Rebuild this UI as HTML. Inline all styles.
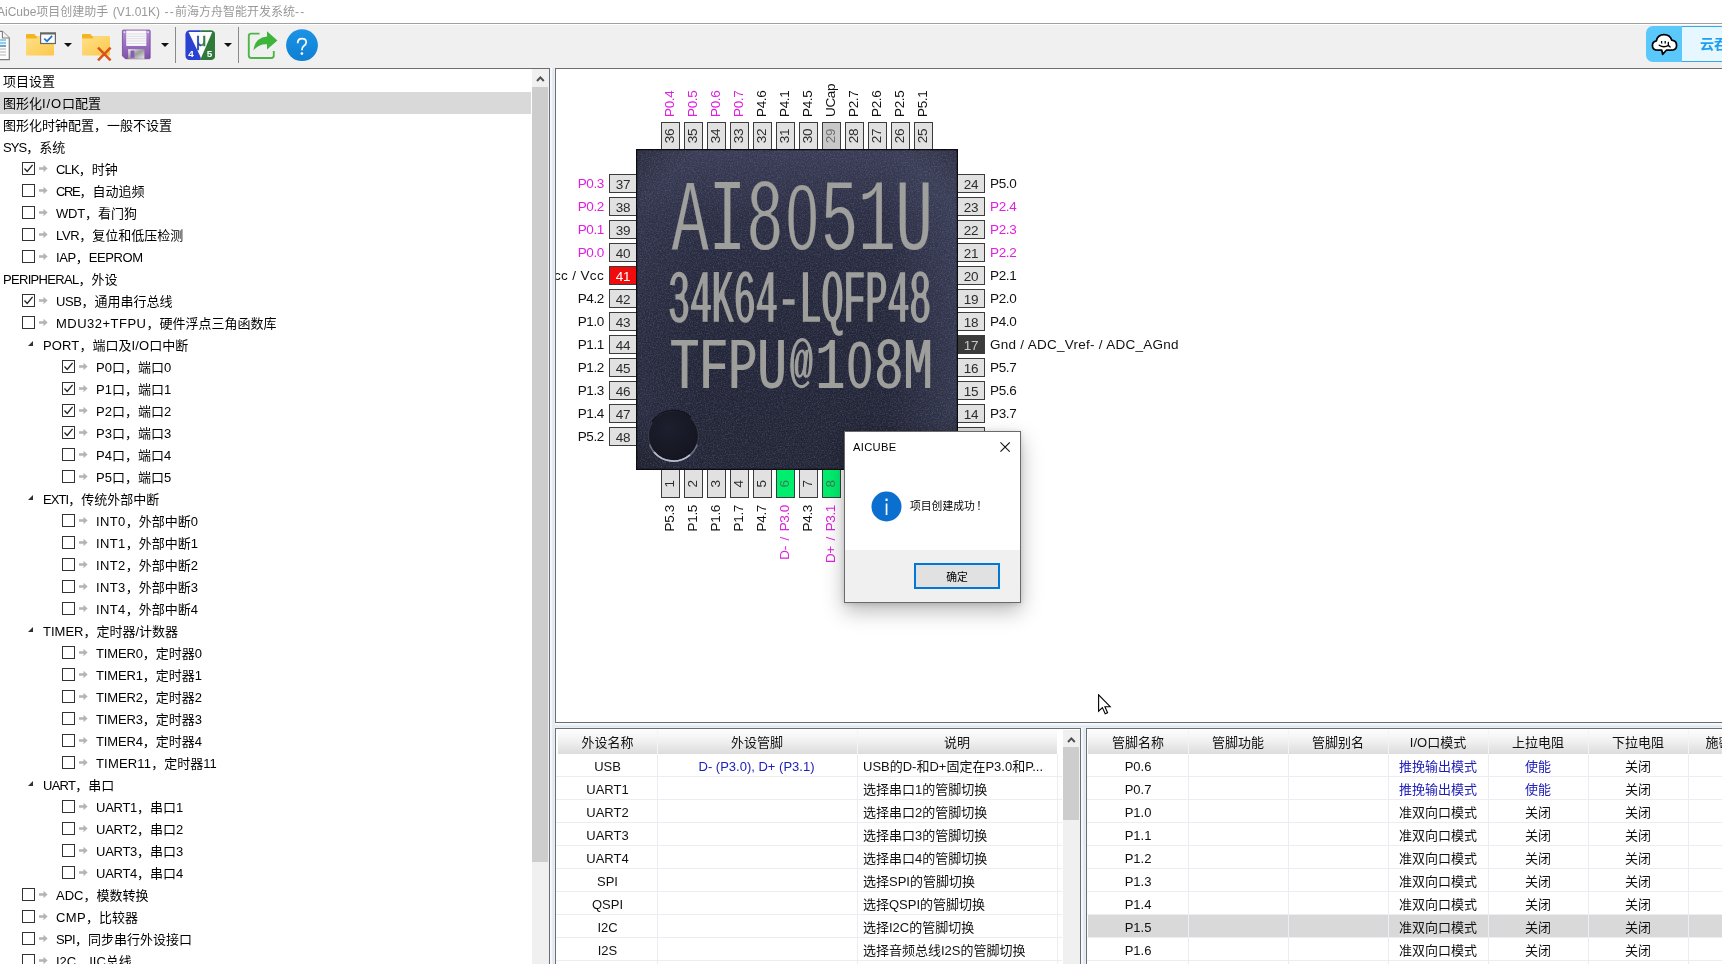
<!DOCTYPE html>
<html lang="zh-CN"><head><meta charset="utf-8"><title>AiCube</title>
<style>
*{box-sizing:border-box;margin:0;padding:0}
html,body{width:1722px;height:964px;overflow:hidden}
body{position:relative;background:#f0f0f0;font-family:"Liberation Sans","Noto Sans CJK SC",sans-serif;font-size:13px;color:#000;-webkit-font-smoothing:antialiased}
.abs{position:absolute}
#title{left:0;top:0;width:1722px;height:23px;background:#fff;color:#999;font-size:12px;line-height:23px;white-space:nowrap}
#title span{position:absolute;left:-3px;top:0.5px;word-spacing:1px}
#title i{font-style:normal;letter-spacing:1.3px}
.l{letter-spacing:-0.35px}
#tbline{left:0;top:23px;width:1722px;height:1px;background:#a0a0a0}
#toolbar{left:0;top:24px;width:1722px;height:44px;background:#f0f0f0}
.sep{position:absolute;top:27px;width:1px;height:36px;background:#8a8a8a}
.dd{position:absolute;width:0;height:0;border-left:4px solid transparent;border-right:4px solid transparent;border-top:4px solid #111;top:43px}
#tree{left:-1px;top:68px;width:551px;height:900px;background:#fff;border:1px solid #6e6e6e;overflow:hidden}
.trow{position:absolute;left:0;height:22px;line-height:22px;margin-top:1.5px;white-space:nowrap;font-size:13px;color:#000}
.cb{position:absolute;width:13px;height:13px;border:1px solid #333;background:#fff}
.cb svg{position:absolute;left:0;top:0}
.ar{position:absolute;width:9px;height:9px}
.ex{position:absolute;width:0;height:0;border-left:5.5px solid transparent;border-bottom:5.5px solid #303030}
#tsb{left:532px;top:69px;width:17px;height:895px;background:#f0f0f0}
#tsb .th{position:absolute;left:0;top:18px;width:16px;height:775px;background:#cdcdcd}
.gap{background:linear-gradient(90deg,#f7fafd,#f2f7fb 40%,#d9e4ed 60%,#eef3f7)}
.gaph{background:linear-gradient(180deg,#f7fafd,#f2f7fb 40%,#dbe5ee 60%,#eef3f7)}
.panel{background:#fff;border:1px solid #6e6e6e;overflow:hidden}
.pin{position:absolute;background:#e1e1e1;border:1px solid #3c3c3c;color:#2c2c2c;font-size:13.5px;letter-spacing:-0.3px;text-align:center;white-space:nowrap}
.pl{position:absolute;font-size:13.5px;letter-spacing:-0.35px;white-space:nowrap;color:#111;line-height:20.5px;height:19px}
.vt{position:absolute;font-size:13.5px;letter-spacing:-0.35px;white-space:nowrap;color:#111;transform-origin:0 0;transform:rotate(-90deg);line-height:19px;height:19px}
.mg{color:#e020e0}
.hdr{position:absolute;height:24px;background:linear-gradient(#fdfdfd,#f1f1f1 45%,#dcdcdc);line-height:25px;text-align:center;font-size:13px;color:#111;white-space:nowrap;overflow:hidden}
.cell{position:absolute;height:23px;line-height:25.5px;font-size:13px;white-space:nowrap;overflow:hidden;color:#111}
.c{text-align:center}
.bl{color:#2020b8}
.hl{position:absolute;height:1px;background:#ececf2}
.vl{position:absolute;width:1px;background:#ececf2}
#app{position:absolute;left:0;top:0;width:1722px;height:964px;overflow:hidden;will-change:transform;background:#f0f0f0}
</style></head><body><div id="app">

<div id="title" class="abs"><span>AiCube项目创建助手 (V1.01K) <i>--</i>前海方舟智能开发系统<i>--</i></span></div>
<div id="tbline" class="abs"></div><div class="abs" style="left:0;top:24px;width:1722px;height:1px;background:#fff"></div>
<div id="toolbar" class="abs" style="top:25px;height:43px"></div>
<!-- new doc icon (cut off at left) -->
<svg class="abs" style="left:-15px;top:29.5px" width="26" height="31" viewBox="0 0 26 31">
<path d="M1.5 1.3H17.4L24.3 8V29.6H1.5Z" fill="#fdfdfd" stroke="#7e7e7e" stroke-width="1.2"/>
<path d="M17.4 1.3V8H24.3" fill="#f3f3f3" stroke="#7e7e7e" stroke-width="1.1"/>
<rect x="5" y="9.2" width="16" height="7.6" fill="#dff4fb"/>
<path d="M5 10H21M5 13H21" stroke="#4aa6e2" stroke-width="1"/><path d="M5 16H21" stroke="#1f5f9f" stroke-width="1.1"/><path d="M5 19H21M5 22H21M5 25H21" stroke="#b4b4b4" stroke-width="1"/>
</svg>
<!-- folder with check window -->
<svg class="abs" style="left:25px;top:30px" width="33" height="28" viewBox="0 0 33 28">
<defs><linearGradient id="fg1" x1="0" y1="0" x2="1" y2="1"><stop offset="0" stop-color="#ffe08a"/><stop offset="1" stop-color="#fbc84a"/></linearGradient></defs>
<path d="M1 5.2Q1 4 2.2 4H9.2L11.6 6.6H28Q29 6.6 29 7.6V9H1Z" fill="#f4b41e"/>
<path d="M1 8.6H11.2L13.6 6.6H28Q29 6.6 29 7.6V24.4Q29 25.6 27.8 25.6H2.2Q1 25.6 1 24.4Z" fill="url(#fg1)"/>
<rect x="15.6" y="2.9" width="14.8" height="10.6" fill="#fdfdfd" stroke="#666" stroke-width="1.2"/>
<rect x="15.6" y="2.9" width="14.8" height="1.6" fill="#666"/>
<path d="M19.2 8.6L22 11.2L27.2 5.9" fill="none" stroke="#1f78d0" stroke-width="1.7"/>
</svg>
<div class="dd" style="left:64px"></div>
<!-- folder with red X -->
<svg class="abs" style="left:81px;top:30px" width="33" height="33" viewBox="0 0 33 33">
<path d="M1 5.2Q1 4 2.2 4H9.2L11.6 6.6H28Q29 6.6 29 7.6V9H1Z" fill="#f4b41e"/>
<path d="M1 8.6H11.2L13.6 6.6H28Q29 6.6 29 7.6V24.4Q29 25.6 27.8 25.6H2.2Q1 25.6 1 24.4Z" fill="url(#fg1)"/>
<path d="M17 17.6L29.6 30.4M29.6 17.6L17 30.4" stroke="#d9541a" stroke-width="2.5" fill="none"/>
</svg>
<!-- floppy -->
<svg class="abs" style="left:120.8px;top:29.4px" width="30.6" height="30.8" viewBox="0 0 32 32">
<defs><linearGradient id="fl1" x1="0" y1="0" x2="0" y2="1"><stop offset="0" stop-color="#b58ad6"/><stop offset="1" stop-color="#7f52a8"/></linearGradient>
<linearGradient id="fl2" x1="0" y1="0" x2="1" y2="1"><stop offset="0" stop-color="#f2f2f2"/><stop offset="0.5" stop-color="#9a9a9a"/><stop offset="1" stop-color="#e8e8e8"/></linearGradient></defs>
<path d="M1.5 2Q1.5 1 2.5 1H29.5Q30.5 1 30.5 2V30Q30.5 31 29.5 31H4.5L1.5 28Z" fill="url(#fl1)" stroke="#6b4392" stroke-width="0.8"/>
<rect x="5.5" y="1.6" width="21" height="16" fill="#fafafa"/>
<path d="M6 5H26M6 7.5H26M6 10H26M6 12.5H26M6 15H26" stroke="#d6d6e2" stroke-width="0.9"/>
<rect x="7.5" y="21" width="17" height="10" fill="url(#fl2)"/>
<rect x="10" y="22.5" width="4" height="7.5" fill="#8a5bb4"/>
<rect x="2.8" y="2.4" width="1.6" height="1.6" fill="#efe6f7"/><rect x="27.6" y="2.4" width="1.6" height="1.6" fill="#efe6f7"/>
</svg>
<div class="dd" style="left:161px"></div>
<div class="sep" style="left:175px"></div>
<!-- uVision 4/5 icon -->
<svg class="abs" style="left:184.5px;top:29.8px" width="30.6" height="30.4" viewBox="0 0 32 32">
<defs><clipPath id="uvc"><rect x="0.3" y="0.3" width="31.4" height="31.4" rx="4.5"/></clipPath>
<linearGradient id="mug" x1="0" y1="0" x2="1" y2="0"><stop offset="0.5" stop-color="#2747b8"/><stop offset="0.5" stop-color="#2f7d4a"/></linearGradient></defs>
<g clip-path="url(#uvc)">
<rect x="0" y="0" width="16.5" height="32" fill="#2a42cf"/><rect x="16.5" y="0" width="15.5" height="32" fill="#2f7a3a"/>
<path d="M3.6 2.2H28.6L16.8 29.4Z" fill="#fcfcfc"/>
</g>
<text x="16.9" y="16.6" font-family="Liberation Sans, sans-serif" font-size="19" text-anchor="middle" fill="url(#mug)" stroke="url(#mug)" stroke-width="0.5">μ</text>
<text x="6.2" y="28.6" font-family="Liberation Sans, sans-serif" font-weight="bold" font-size="10.5" text-anchor="middle" fill="#fff">4</text>
<text x="25.6" y="28.6" font-family="Liberation Sans, sans-serif" font-weight="bold" font-size="10.5" text-anchor="middle" fill="#fff">5</text>
</svg>
<div class="dd" style="left:223.5px"></div>
<div class="sep" style="left:238px"></div>
<!-- share icon -->
<svg class="abs" style="left:247px;top:30px" width="32" height="30" viewBox="0 0 32 30">
<path d="M12.5 3.6H4.2Q1.8 3.6 1.8 6V25.6Q1.8 28 4.2 28H24.4Q26.8 28 26.8 25.6V21" fill="none" stroke="#4cb648" stroke-width="1.9"/>
<path d="M20 1.2L30.4 10.4L20 19.6V14.2Q11.6 13.6 6.4 20.6Q7.6 8 20 6.6Z" fill="#3db43a"/>
</svg>
<!-- help -->
<svg class="abs" style="left:285px;top:28px" width="34" height="34" viewBox="0 0 34 34">
<defs><linearGradient id="hg" x1="0" y1="0" x2="0" y2="1"><stop offset="0" stop-color="#1b93e6"/><stop offset="1" stop-color="#0f7fd2"/></linearGradient></defs>
<circle cx="17" cy="17.2" r="15.9" fill="url(#hg)"/>
<path d="M12.7 15.2Q12.7 10.6 17 10.6Q21.2 10.6 21.2 14.2Q21.2 16.2 19 17.7Q16.9 19.1 16.9 22.2" fill="none" stroke="#fff" stroke-width="1.7"/>
<circle cx="16.9" cy="25.6" r="1.35" fill="#fff"/>
</svg>
<!-- cloud badge -->
<div class="abs" style="left:1646px;top:26px;width:90px;height:36px;border-radius:7px;background:#5bc8fb;overflow:hidden">
<div class="abs" style="left:36px;top:0;width:60px;height:36px;background:#e6f7ff;border-top:1px solid #35a8ea;border-bottom:1px solid #35a8ea"></div>
<svg class="abs" style="left:5px;top:7px" width="27" height="23" viewBox="0 0 27 23">
<path d="M7.2 17.2Q1.4 17.2 1.4 12.4Q1.4 8.6 5.4 7.8Q6.6 1.6 13 1.6Q19 1.6 20.8 7.2Q25.6 7.8 25.6 12.4Q25.6 17.2 19.6 17.2H15.4L11.6 21.4L10.8 17.2Z" fill="#fff" stroke="#000" stroke-width="1.7" stroke-linejoin="round"/>
<path d="M10.6 8V10.4M14.2 8V10.4" stroke="#000" stroke-width="1.3" fill="none"/>
<path d="M8.2 12.2Q12.6 15.2 17.6 12.4M17.4 9.4Q16.6 12.6 19.2 14" stroke="#000" stroke-width="1.3" fill="none" stroke-linecap="round"/>
</svg>
<div class="abs" style="left:54px;top:8px;font-size:14px;line-height:20px;font-weight:bold;color:#1e9ff0;white-space:nowrap">云吞</div>
</div>

<div id="tree" class="abs">
<div class="abs" style="left:0;top:23px;width:531px;height:22px;background:#d9d9d9"></div>
<div class="trow" id="r0" style="left:3px;top:0px">项目设置</div>
<div class="trow" id="r1" style="left:3px;top:22px">图形化<span style="letter-spacing:0.84px">I/O</span>口配置</div>
<div class="trow" id="r2" style="left:3px;top:44px">图形化时钟配置，一般不设置</div>
<div class="trow" id="r3" style="left:3px;top:66px"><span style="letter-spacing:-0.94px">SYS</span>，系统</div>
<div class="cb" style="left:22px;top:93px"><svg width="11" height="11" viewBox="0 0 11 11"><path d="M1.5 5.5 L4.2 8.4 L9.6 1.8" fill="none" stroke="#222" stroke-width="1.3"/></svg></div>
<svg class="ar" style="left:39px;top:95px" viewBox="0 0 9 9"><path d="M0 3.2H4.5V0.8L8.6 4.5L4.5 8.2V5.8H0Z" fill="#b4b4b4"/></svg>
<div class="trow" id="r4" style="left:56px;top:88px"><span style="letter-spacing:-0.84px">CLK</span>，时钟</div>
<div class="cb" style="left:22px;top:115px"></div>
<svg class="ar" style="left:39px;top:117px" viewBox="0 0 9 9"><path d="M0 3.2H4.5V0.8L8.6 4.5L4.5 8.2V5.8H0Z" fill="#b4b4b4"/></svg>
<div class="trow" id="r5" style="left:56px;top:110px"><span style="letter-spacing:-1.36px">CRE</span>，自动追频</div>
<div class="cb" style="left:22px;top:137px"></div>
<svg class="ar" style="left:39px;top:139px" viewBox="0 0 9 9"><path d="M0 3.2H4.5V0.8L8.6 4.5L4.5 8.2V5.8H0Z" fill="#b4b4b4"/></svg>
<div class="trow" id="r6" style="left:56px;top:132px"><span style="letter-spacing:-0.24px">WDT</span>，看门狗</div>
<div class="cb" style="left:22px;top:159px"></div>
<svg class="ar" style="left:39px;top:161px" viewBox="0 0 9 9"><path d="M0 3.2H4.5V0.8L8.6 4.5L4.5 8.2V5.8H0Z" fill="#b4b4b4"/></svg>
<div class="trow" id="r7" style="left:56px;top:154px"><span style="letter-spacing:-0.38px">LVR</span>，复位和低压检测</div>
<div class="cb" style="left:22px;top:181px"></div>
<svg class="ar" style="left:39px;top:183px" viewBox="0 0 9 9"><path d="M0 3.2H4.5V0.8L8.6 4.5L4.5 8.2V5.8H0Z" fill="#b4b4b4"/></svg>
<div class="trow" id="r8" style="left:56px;top:176px"><span style="letter-spacing:-0.40px">IAP</span>，<span style="letter-spacing:-0.40px">EEPROM</span></div>
<div class="trow" id="r9" style="left:3px;top:198px"><span style="letter-spacing:-0.69px">PERIPHERAL</span>，外设</div>
<div class="cb" style="left:22px;top:225px"><svg width="11" height="11" viewBox="0 0 11 11"><path d="M1.5 5.5 L4.2 8.4 L9.6 1.8" fill="none" stroke="#222" stroke-width="1.3"/></svg></div>
<svg class="ar" style="left:39px;top:227px" viewBox="0 0 9 9"><path d="M0 3.2H4.5V0.8L8.6 4.5L4.5 8.2V5.8H0Z" fill="#b4b4b4"/></svg>
<div class="trow" id="r10" style="left:56px;top:220px"><span style="letter-spacing:-0.45px">USB</span>，通用串行总线</div>
<div class="cb" style="left:22px;top:247px"></div>
<svg class="ar" style="left:39px;top:249px" viewBox="0 0 9 9"><path d="M0 3.2H4.5V0.8L8.6 4.5L4.5 8.2V5.8H0Z" fill="#b4b4b4"/></svg>
<div class="trow" id="r11" style="left:56px;top:242px"><span style="letter-spacing:0.49px">MDU32+TFPU</span>，硬件浮点三角函数库</div>
<div class="ex" style="left:28px;top:272px"></div>
<div class="trow" id="r12" style="left:43px;top:264px"><span style="letter-spacing:0.13px">PORT</span>，端口及<span style="letter-spacing:0.13px">I/O</span>口中断</div>
<div class="cb" style="left:62px;top:291px"><svg width="11" height="11" viewBox="0 0 11 11"><path d="M1.5 5.5 L4.2 8.4 L9.6 1.8" fill="none" stroke="#222" stroke-width="1.3"/></svg></div>
<svg class="ar" style="left:79px;top:293px" viewBox="0 0 9 9"><path d="M0 3.2H4.5V0.8L8.6 4.5L4.5 8.2V5.8H0Z" fill="#b4b4b4"/></svg>
<div class="trow" id="r13" style="left:96px;top:286px">P0口，端口0</div>
<div class="cb" style="left:62px;top:313px"><svg width="11" height="11" viewBox="0 0 11 11"><path d="M1.5 5.5 L4.2 8.4 L9.6 1.8" fill="none" stroke="#222" stroke-width="1.3"/></svg></div>
<svg class="ar" style="left:79px;top:315px" viewBox="0 0 9 9"><path d="M0 3.2H4.5V0.8L8.6 4.5L4.5 8.2V5.8H0Z" fill="#b4b4b4"/></svg>
<div class="trow" id="r14" style="left:96px;top:308px">P1口，端口1</div>
<div class="cb" style="left:62px;top:335px"><svg width="11" height="11" viewBox="0 0 11 11"><path d="M1.5 5.5 L4.2 8.4 L9.6 1.8" fill="none" stroke="#222" stroke-width="1.3"/></svg></div>
<svg class="ar" style="left:79px;top:337px" viewBox="0 0 9 9"><path d="M0 3.2H4.5V0.8L8.6 4.5L4.5 8.2V5.8H0Z" fill="#b4b4b4"/></svg>
<div class="trow" id="r15" style="left:96px;top:330px">P2口，端口2</div>
<div class="cb" style="left:62px;top:357px"><svg width="11" height="11" viewBox="0 0 11 11"><path d="M1.5 5.5 L4.2 8.4 L9.6 1.8" fill="none" stroke="#222" stroke-width="1.3"/></svg></div>
<svg class="ar" style="left:79px;top:359px" viewBox="0 0 9 9"><path d="M0 3.2H4.5V0.8L8.6 4.5L4.5 8.2V5.8H0Z" fill="#b4b4b4"/></svg>
<div class="trow" id="r16" style="left:96px;top:352px">P3口，端口3</div>
<div class="cb" style="left:62px;top:379px"></div>
<svg class="ar" style="left:79px;top:381px" viewBox="0 0 9 9"><path d="M0 3.2H4.5V0.8L8.6 4.5L4.5 8.2V5.8H0Z" fill="#b4b4b4"/></svg>
<div class="trow" id="r17" style="left:96px;top:374px">P4口，端口4</div>
<div class="cb" style="left:62px;top:401px"></div>
<svg class="ar" style="left:79px;top:403px" viewBox="0 0 9 9"><path d="M0 3.2H4.5V0.8L8.6 4.5L4.5 8.2V5.8H0Z" fill="#b4b4b4"/></svg>
<div class="trow" id="r18" style="left:96px;top:396px">P5口，端口5</div>
<div class="ex" style="left:28px;top:426px"></div>
<div class="trow" id="r19" style="left:43px;top:418px"><span style="letter-spacing:-0.93px">EXTI</span>，传统外部中断</div>
<div class="cb" style="left:62px;top:445px"></div>
<svg class="ar" style="left:79px;top:447px" viewBox="0 0 9 9"><path d="M0 3.2H4.5V0.8L8.6 4.5L4.5 8.2V5.8H0Z" fill="#b4b4b4"/></svg>
<div class="trow" id="r20" style="left:96px;top:440px"><span style="letter-spacing:0.38px">INT0</span>，外部中断<span style="letter-spacing:0.38px">0</span></div>
<div class="cb" style="left:62px;top:467px"></div>
<svg class="ar" style="left:79px;top:469px" viewBox="0 0 9 9"><path d="M0 3.2H4.5V0.8L8.6 4.5L4.5 8.2V5.8H0Z" fill="#b4b4b4"/></svg>
<div class="trow" id="r21" style="left:96px;top:462px"><span style="letter-spacing:0.38px">INT1</span>，外部中断<span style="letter-spacing:0.38px">1</span></div>
<div class="cb" style="left:62px;top:489px"></div>
<svg class="ar" style="left:79px;top:491px" viewBox="0 0 9 9"><path d="M0 3.2H4.5V0.8L8.6 4.5L4.5 8.2V5.8H0Z" fill="#b4b4b4"/></svg>
<div class="trow" id="r22" style="left:96px;top:484px"><span style="letter-spacing:0.38px">INT2</span>，外部中断<span style="letter-spacing:0.38px">2</span></div>
<div class="cb" style="left:62px;top:511px"></div>
<svg class="ar" style="left:79px;top:513px" viewBox="0 0 9 9"><path d="M0 3.2H4.5V0.8L8.6 4.5L4.5 8.2V5.8H0Z" fill="#b4b4b4"/></svg>
<div class="trow" id="r23" style="left:96px;top:506px"><span style="letter-spacing:0.38px">INT3</span>，外部中断<span style="letter-spacing:0.38px">3</span></div>
<div class="cb" style="left:62px;top:533px"></div>
<svg class="ar" style="left:79px;top:535px" viewBox="0 0 9 9"><path d="M0 3.2H4.5V0.8L8.6 4.5L4.5 8.2V5.8H0Z" fill="#b4b4b4"/></svg>
<div class="trow" id="r24" style="left:96px;top:528px"><span style="letter-spacing:0.38px">INT4</span>，外部中断<span style="letter-spacing:0.38px">4</span></div>
<div class="ex" style="left:28px;top:558px"></div>
<div class="trow" id="r25" style="left:43px;top:550px">TIMER，定时器/计数器</div>
<div class="cb" style="left:62px;top:577px"></div>
<svg class="ar" style="left:79px;top:579px" viewBox="0 0 9 9"><path d="M0 3.2H4.5V0.8L8.6 4.5L4.5 8.2V5.8H0Z" fill="#b4b4b4"/></svg>
<div class="trow" id="r26" style="left:96px;top:572px"><span style="letter-spacing:-0.16px">TIMER0</span>，定时器<span style="letter-spacing:-0.16px">0</span></div>
<div class="cb" style="left:62px;top:599px"></div>
<svg class="ar" style="left:79px;top:601px" viewBox="0 0 9 9"><path d="M0 3.2H4.5V0.8L8.6 4.5L4.5 8.2V5.8H0Z" fill="#b4b4b4"/></svg>
<div class="trow" id="r27" style="left:96px;top:594px"><span style="letter-spacing:-0.16px">TIMER1</span>，定时器<span style="letter-spacing:-0.16px">1</span></div>
<div class="cb" style="left:62px;top:621px"></div>
<svg class="ar" style="left:79px;top:623px" viewBox="0 0 9 9"><path d="M0 3.2H4.5V0.8L8.6 4.5L4.5 8.2V5.8H0Z" fill="#b4b4b4"/></svg>
<div class="trow" id="r28" style="left:96px;top:616px"><span style="letter-spacing:-0.16px">TIMER2</span>，定时器<span style="letter-spacing:-0.16px">2</span></div>
<div class="cb" style="left:62px;top:643px"></div>
<svg class="ar" style="left:79px;top:645px" viewBox="0 0 9 9"><path d="M0 3.2H4.5V0.8L8.6 4.5L4.5 8.2V5.8H0Z" fill="#b4b4b4"/></svg>
<div class="trow" id="r29" style="left:96px;top:638px"><span style="letter-spacing:-0.16px">TIMER3</span>，定时器<span style="letter-spacing:-0.16px">3</span></div>
<div class="cb" style="left:62px;top:665px"></div>
<svg class="ar" style="left:79px;top:667px" viewBox="0 0 9 9"><path d="M0 3.2H4.5V0.8L8.6 4.5L4.5 8.2V5.8H0Z" fill="#b4b4b4"/></svg>
<div class="trow" id="r30" style="left:96px;top:660px"><span style="letter-spacing:-0.16px">TIMER4</span>，定时器<span style="letter-spacing:-0.16px">4</span></div>
<div class="cb" style="left:62px;top:687px"></div>
<svg class="ar" style="left:79px;top:689px" viewBox="0 0 9 9"><path d="M0 3.2H4.5V0.8L8.6 4.5L4.5 8.2V5.8H0Z" fill="#b4b4b4"/></svg>
<div class="trow" id="r31" style="left:96px;top:682px"><span style="letter-spacing:0.17px">TIMER11</span>，定时器<span style="letter-spacing:0.17px">11</span></div>
<div class="ex" style="left:28px;top:712px"></div>
<div class="trow" id="r32" style="left:43px;top:704px"><span style="letter-spacing:-0.74px">UART</span>，串口</div>
<div class="cb" style="left:62px;top:731px"></div>
<svg class="ar" style="left:79px;top:733px" viewBox="0 0 9 9"><path d="M0 3.2H4.5V0.8L8.6 4.5L4.5 8.2V5.8H0Z" fill="#b4b4b4"/></svg>
<div class="trow" id="r33" style="left:96px;top:726px"><span style="letter-spacing:-0.26px">UART1</span>，串口<span style="letter-spacing:-0.26px">1</span></div>
<div class="cb" style="left:62px;top:753px"></div>
<svg class="ar" style="left:79px;top:755px" viewBox="0 0 9 9"><path d="M0 3.2H4.5V0.8L8.6 4.5L4.5 8.2V5.8H0Z" fill="#b4b4b4"/></svg>
<div class="trow" id="r34" style="left:96px;top:748px"><span style="letter-spacing:-0.26px">UART2</span>，串口<span style="letter-spacing:-0.26px">2</span></div>
<div class="cb" style="left:62px;top:775px"></div>
<svg class="ar" style="left:79px;top:777px" viewBox="0 0 9 9"><path d="M0 3.2H4.5V0.8L8.6 4.5L4.5 8.2V5.8H0Z" fill="#b4b4b4"/></svg>
<div class="trow" id="r35" style="left:96px;top:770px"><span style="letter-spacing:-0.26px">UART3</span>，串口<span style="letter-spacing:-0.26px">3</span></div>
<div class="cb" style="left:62px;top:797px"></div>
<svg class="ar" style="left:79px;top:799px" viewBox="0 0 9 9"><path d="M0 3.2H4.5V0.8L8.6 4.5L4.5 8.2V5.8H0Z" fill="#b4b4b4"/></svg>
<div class="trow" id="r36" style="left:96px;top:792px"><span style="letter-spacing:-0.26px">UART4</span>，串口<span style="letter-spacing:-0.26px">4</span></div>
<div class="cb" style="left:22px;top:819px"></div>
<svg class="ar" style="left:39px;top:821px" viewBox="0 0 9 9"><path d="M0 3.2H4.5V0.8L8.6 4.5L4.5 8.2V5.8H0Z" fill="#b4b4b4"/></svg>
<div class="trow" id="r37" style="left:56px;top:814px">ADC，模数转换</div>
<div class="cb" style="left:22px;top:841px"></div>
<svg class="ar" style="left:39px;top:843px" viewBox="0 0 9 9"><path d="M0 3.2H4.5V0.8L8.6 4.5L4.5 8.2V5.8H0Z" fill="#b4b4b4"/></svg>
<div class="trow" id="r38" style="left:56px;top:836px"><span style="letter-spacing:0.33px">CMP</span>，比较器</div>
<div class="cb" style="left:22px;top:863px"></div>
<svg class="ar" style="left:39px;top:865px" viewBox="0 0 9 9"><path d="M0 3.2H4.5V0.8L8.6 4.5L4.5 8.2V5.8H0Z" fill="#b4b4b4"/></svg>
<div class="trow" id="r39" style="left:56px;top:858px"><span style="letter-spacing:-0.69px">SPI</span>，同步串行外设接口</div>
<div class="cb" style="left:22px;top:885px"></div>
<svg class="ar" style="left:39px;top:887px" viewBox="0 0 9 9"><path d="M0 3.2H4.5V0.8L8.6 4.5L4.5 8.2V5.8H0Z" fill="#b4b4b4"/></svg>
<div class="trow" id="r40" style="left:56px;top:880px">I2C，IIC总线</div>
</div>
<div id="tsb" class="abs"><svg class="abs" style="left:4px;top:6px" width="9" height="7" viewBox="0 0 9 7"><path d="M1 6L4.4 2.4L7.8 6" fill="none" stroke="#505050" stroke-width="2"/></svg><div class="th"></div></div>
<div class="abs" style="left:549px;top:68px;width:1px;height:900px;background:#6e6e6e"></div>
<div class="abs gap" style="left:550px;top:68px;width:5px;height:900px"></div>
<div class="abs gaph" style="left:555px;top:723px;width:1170px;height:5px"></div>
<div class="abs panel" style="left:555px;top:68px;width:1180px;height:655px">
<div class="pin" style="left:105px;top:53px;width:19px;height:28px;"><div class="vt" style="left:-1.5px;top:23px;width:20px;text-align:center;line-height:18px;height:18px;color:inherit">36</div></div>
<div class="vt mg" style="left:104px;top:48px">P0.4</div>
<div class="pin" style="left:128px;top:53px;width:19px;height:28px;"><div class="vt" style="left:-1.5px;top:23px;width:20px;text-align:center;line-height:18px;height:18px;color:inherit">35</div></div>
<div class="vt mg" style="left:127px;top:48px">P0.5</div>
<div class="pin" style="left:151px;top:53px;width:19px;height:28px;"><div class="vt" style="left:-1.5px;top:23px;width:20px;text-align:center;line-height:18px;height:18px;color:inherit">34</div></div>
<div class="vt mg" style="left:150px;top:48px">P0.6</div>
<div class="pin" style="left:174px;top:53px;width:19px;height:28px;"><div class="vt" style="left:-1.5px;top:23px;width:20px;text-align:center;line-height:18px;height:18px;color:inherit">33</div></div>
<div class="vt mg" style="left:173px;top:48px">P0.7</div>
<div class="pin" style="left:197px;top:53px;width:19px;height:28px;"><div class="vt" style="left:-1.5px;top:23px;width:20px;text-align:center;line-height:18px;height:18px;color:inherit">32</div></div>
<div class="vt" style="left:196px;top:48px">P4.6</div>
<div class="pin" style="left:220px;top:53px;width:19px;height:28px;"><div class="vt" style="left:-1.5px;top:23px;width:20px;text-align:center;line-height:18px;height:18px;color:inherit">31</div></div>
<div class="vt" style="left:219px;top:48px">P4.1</div>
<div class="pin" style="left:243px;top:53px;width:19px;height:28px;"><div class="vt" style="left:-1.5px;top:23px;width:20px;text-align:center;line-height:18px;height:18px;color:inherit">30</div></div>
<div class="vt" style="left:242px;top:48px">P4.5</div>
<div class="pin" style="left:266px;top:53px;width:19px;height:28px;background:#c8c8c8;color:#707070;"><div class="vt" style="left:-1.5px;top:23px;width:20px;text-align:center;line-height:18px;height:18px;color:inherit">29</div></div>
<div class="vt" style="left:265px;top:48px">UCap</div>
<div class="pin" style="left:289px;top:53px;width:19px;height:28px;"><div class="vt" style="left:-1.5px;top:23px;width:20px;text-align:center;line-height:18px;height:18px;color:inherit">28</div></div>
<div class="vt" style="left:288px;top:48px">P2.7</div>
<div class="pin" style="left:312px;top:53px;width:19px;height:28px;"><div class="vt" style="left:-1.5px;top:23px;width:20px;text-align:center;line-height:18px;height:18px;color:inherit">27</div></div>
<div class="vt" style="left:311px;top:48px">P2.6</div>
<div class="pin" style="left:335px;top:53px;width:19px;height:28px;"><div class="vt" style="left:-1.5px;top:23px;width:20px;text-align:center;line-height:18px;height:18px;color:inherit">26</div></div>
<div class="vt" style="left:334px;top:48px">P2.5</div>
<div class="pin" style="left:358px;top:53px;width:19px;height:28px;"><div class="vt" style="left:-1.5px;top:23px;width:20px;text-align:center;line-height:18px;height:18px;color:inherit">25</div></div>
<div class="vt" style="left:357px;top:48px">P5.1</div>
<div class="pin" style="left:105px;top:400px;width:19px;height:29px;"><div class="vt" style="left:-1.5px;top:24px;width:20px;text-align:center;line-height:18px;height:18px;color:inherit">1</div></div>
<div class="vt" style="left:104px;top:576px;width:140px;text-align:right;word-spacing:2.3px">P5.3</div>
<div class="pin" style="left:128px;top:400px;width:19px;height:29px;"><div class="vt" style="left:-1.5px;top:24px;width:20px;text-align:center;line-height:18px;height:18px;color:inherit">2</div></div>
<div class="vt" style="left:127px;top:576px;width:140px;text-align:right;word-spacing:2.3px">P1.5</div>
<div class="pin" style="left:151px;top:400px;width:19px;height:29px;"><div class="vt" style="left:-1.5px;top:24px;width:20px;text-align:center;line-height:18px;height:18px;color:inherit">3</div></div>
<div class="vt" style="left:150px;top:576px;width:140px;text-align:right;word-spacing:2.3px">P1.6</div>
<div class="pin" style="left:174px;top:400px;width:19px;height:29px;"><div class="vt" style="left:-1.5px;top:24px;width:20px;text-align:center;line-height:18px;height:18px;color:inherit">4</div></div>
<div class="vt" style="left:173px;top:576px;width:140px;text-align:right;word-spacing:2.3px">P1.7</div>
<div class="pin" style="left:197px;top:400px;width:19px;height:29px;"><div class="vt" style="left:-1.5px;top:24px;width:20px;text-align:center;line-height:18px;height:18px;color:inherit">5</div></div>
<div class="vt" style="left:196px;top:576px;width:140px;text-align:right;word-spacing:2.3px">P4.7</div>
<div class="pin" style="left:220px;top:400px;width:19px;height:29px;background:#00ee6e;color:#3f7a55;"><div class="vt" style="left:-1.5px;top:24px;width:20px;text-align:center;line-height:18px;height:18px;color:inherit">6</div></div>
<div class="vt mg" style="left:219px;top:576px;width:140px;text-align:right;word-spacing:2.3px">D- / P3.0</div>
<div class="pin" style="left:243px;top:400px;width:19px;height:29px;"><div class="vt" style="left:-1.5px;top:24px;width:20px;text-align:center;line-height:18px;height:18px;color:inherit">7</div></div>
<div class="vt" style="left:242px;top:576px;width:140px;text-align:right;word-spacing:2.3px">P4.3</div>
<div class="pin" style="left:266px;top:400px;width:19px;height:29px;background:#00ee6e;color:#3f7a55;"><div class="vt" style="left:-1.5px;top:24px;width:20px;text-align:center;line-height:18px;height:18px;color:inherit">8</div></div>
<div class="vt mg" style="left:265px;top:576px;width:140px;text-align:right;word-spacing:2.3px">D+ / P3.1</div>
<div class="pin" style="left:289px;top:400px;width:19px;height:29px;"><div class="vt" style="left:-1.5px;top:24px;width:20px;text-align:center;line-height:18px;height:18px;color:inherit">9</div></div>
<div class="vt" style="left:288px;top:576px;width:140px;text-align:right;word-spacing:2.3px">P3.2</div>
<div class="pin" style="left:312px;top:400px;width:19px;height:29px;"><div class="vt" style="left:-1.5px;top:24px;width:20px;text-align:center;line-height:18px;height:18px;color:inherit">10</div></div>
<div class="vt" style="left:311px;top:576px;width:140px;text-align:right;word-spacing:2.3px">P3.3</div>
<div class="pin" style="left:335px;top:400px;width:19px;height:29px;"><div class="vt" style="left:-1.5px;top:24px;width:20px;text-align:center;line-height:18px;height:18px;color:inherit">11</div></div>
<div class="vt" style="left:334px;top:576px;width:140px;text-align:right;word-spacing:2.3px">P3.4</div>
<div class="pin" style="left:358px;top:400px;width:19px;height:29px;"><div class="vt" style="left:-1.5px;top:24px;width:20px;text-align:center;line-height:18px;height:18px;color:inherit">12</div></div>
<div class="vt" style="left:357px;top:576px;width:140px;text-align:right;word-spacing:2.3px">P3.5</div>
<div class="pin" style="left:53px;top:105px;width:28px;height:19px;line-height:19px;">37</div>
<div class="pl mg" style="right:1130px;top:105px;text-align:right">P0.3</div>
<div class="pin" style="left:53px;top:128px;width:28px;height:19px;line-height:19px;">38</div>
<div class="pl mg" style="right:1130px;top:128px;text-align:right">P0.2</div>
<div class="pin" style="left:53px;top:151px;width:28px;height:19px;line-height:19px;">39</div>
<div class="pl mg" style="right:1130px;top:151px;text-align:right">P0.1</div>
<div class="pin" style="left:53px;top:174px;width:28px;height:19px;line-height:19px;">40</div>
<div class="pl mg" style="right:1130px;top:174px;text-align:right">P0.0</div>
<div class="pin" style="left:53px;top:197px;width:28px;height:19px;line-height:19px;background:#f00c0c;color:#fff;">41</div>
<div class="pl" style="right:1130px;top:197px;text-align:right;letter-spacing:0.35px">ADC_Vref+ / AVcc / Vcc</div>
<div class="pin" style="left:53px;top:220px;width:28px;height:19px;line-height:19px;">42</div>
<div class="pl" style="right:1130px;top:220px;text-align:right">P4.2</div>
<div class="pin" style="left:53px;top:243px;width:28px;height:19px;line-height:19px;">43</div>
<div class="pl" style="right:1130px;top:243px;text-align:right">P1.0</div>
<div class="pin" style="left:53px;top:266px;width:28px;height:19px;line-height:19px;">44</div>
<div class="pl" style="right:1130px;top:266px;text-align:right">P1.1</div>
<div class="pin" style="left:53px;top:289px;width:28px;height:19px;line-height:19px;">45</div>
<div class="pl" style="right:1130px;top:289px;text-align:right">P1.2</div>
<div class="pin" style="left:53px;top:312px;width:28px;height:19px;line-height:19px;">46</div>
<div class="pl" style="right:1130px;top:312px;text-align:right">P1.3</div>
<div class="pin" style="left:53px;top:335px;width:28px;height:19px;line-height:19px;">47</div>
<div class="pl" style="right:1130px;top:335px;text-align:right">P1.4</div>
<div class="pin" style="left:53px;top:358px;width:28px;height:19px;line-height:19px;">48</div>
<div class="pl" style="right:1130px;top:358px;text-align:right">P5.2</div>
<div class="pin" style="left:401px;top:105px;width:28px;height:19px;line-height:19px;">24</div>
<div class="pl" style="left:434px;top:105px">P5.0</div>
<div class="pin" style="left:401px;top:128px;width:28px;height:19px;line-height:19px;">23</div>
<div class="pl mg" style="left:434px;top:128px">P2.4</div>
<div class="pin" style="left:401px;top:151px;width:28px;height:19px;line-height:19px;">22</div>
<div class="pl mg" style="left:434px;top:151px">P2.3</div>
<div class="pin" style="left:401px;top:174px;width:28px;height:19px;line-height:19px;">21</div>
<div class="pl mg" style="left:434px;top:174px">P2.2</div>
<div class="pin" style="left:401px;top:197px;width:28px;height:19px;line-height:19px;">20</div>
<div class="pl" style="left:434px;top:197px">P2.1</div>
<div class="pin" style="left:401px;top:220px;width:28px;height:19px;line-height:19px;">19</div>
<div class="pl" style="left:434px;top:220px">P2.0</div>
<div class="pin" style="left:401px;top:243px;width:28px;height:19px;line-height:19px;">18</div>
<div class="pl" style="left:434px;top:243px">P4.0</div>
<div class="pin" style="left:401px;top:266px;width:28px;height:19px;line-height:19px;background:#3b3b3b;color:#c8c8c8;">17</div>
<div class="pl" style="left:434px;top:266px;letter-spacing:0.27px">Gnd / ADC_Vref- / ADC_AGnd</div>
<div class="pin" style="left:401px;top:289px;width:28px;height:19px;line-height:19px;">16</div>
<div class="pl" style="left:434px;top:289px">P5.7</div>
<div class="pin" style="left:401px;top:312px;width:28px;height:19px;line-height:19px;">15</div>
<div class="pl" style="left:434px;top:312px">P5.6</div>
<div class="pin" style="left:401px;top:335px;width:28px;height:19px;line-height:19px;">14</div>
<div class="pl" style="left:434px;top:335px">P3.7</div>
<div class="pin" style="left:401px;top:358px;width:28px;height:19px;line-height:19px;">13</div>
<div class="pl" style="left:434px;top:358px">P3.6</div>
<svg class="abs" style="left:80px;top:80px" width="322" height="321" viewBox="0 0 322 321">
<defs>
<linearGradient id="cg" x1="0" y1="0" x2="0" y2="1"><stop offset="0" stop-color="#383b54"/><stop offset="0.22" stop-color="#2a2d42"/><stop offset="0.6" stop-color="#222537"/><stop offset="1" stop-color="#222536"/></linearGradient>
<linearGradient id="rg" x1="0" y1="0" x2="1" y2="0"><stop offset="0" stop-color="#5a5f82" stop-opacity="0.12"/><stop offset="0.2" stop-color="#5a5f82" stop-opacity="0"/><stop offset="0.78" stop-color="#5a5f82" stop-opacity="0"/><stop offset="1" stop-color="#5a5f82" stop-opacity="0.3"/></linearGradient>
<radialGradient id="vg" cx="50%" cy="50%" r="72%"><stop offset="0.8" stop-color="#000" stop-opacity="0"/><stop offset="1" stop-color="#000" stop-opacity="0.35"/></radialGradient>
<filter id="nz" x="0" y="0" width="100%" height="100%"><feTurbulence type="fractalNoise" baseFrequency="0.75" numOctaves="2" seed="3"/><feColorMatrix values="0 0 0 0 0.5  0 0 0 0 0.52  0 0 0 0 0.66  0 0 0 0.9 -0.36"/><feGaussianBlur stdDeviation="0.5"/></filter>
<filter id="thin1" x="-2%" y="-5%" width="104%" height="110%"><feMorphology operator="erode" radius="0 1"/><feGaussianBlur stdDeviation="0.55"/></filter><filter id="thin2" x="-2%" y="-5%" width="104%" height="110%"><feMorphology operator="erode" radius="0 2"/><feGaussianBlur stdDeviation="0.55"/></filter>
<filter id="b1" x="-10%" y="-50%" width="120%" height="200%"><feGaussianBlur stdDeviation="0.5"/></filter>
<radialGradient id="dg" cx="40%" cy="35%" r="70%"><stop offset="0" stop-color="#1d1f2f"/><stop offset="1" stop-color="#14151f"/></radialGradient>
</defs>
<rect width="322" height="321" fill="url(#cg)"/>
<rect width="322" height="321" fill="url(#rg)"/>
<rect width="322" height="321" fill="url(#vg)"/>
<rect width="322" height="321" filter="url(#nz)" opacity="0.5"/>
<rect x="0.5" y="0.5" width="321" height="320" fill="none" stroke="#0b0b10" stroke-width="1.5"/>
<g fill="#a5a5a1" font-family="Liberation Mono, monospace" opacity="0.95"><g filter="url(#thin1)"><text transform="translate(35.5,100.5) scale(0.604,1)" font-size="103" stroke="#a5a5a1" stroke-width="0.2" x="0.0 61.8 123.6 190.0 247.2 309.1 370.9" dy="0.0 0.0 0.0 0.0 0.0 0.0 0.0">AI8<tspan font-family="Liberation Sans, sans-serif" font-size="94.6">0</tspan>51U</text></g><g filter="url(#thin2)"><text transform="translate(32,173) scale(0.481,1)" font-size="76" stroke="#a5a5a1" stroke-width="3.6" x="0.0 45.6 91.2 136.8 182.4 228.0 273.6 319.3 364.9 410.5 456.1 501.7" dy="0.0 0.0 0.0 0.0 0.0 0.0 0.0 0.0 0.0 0.0 0.0 0.0">34K64-LQFP48</text></g><g filter="url(#thin1)"><text transform="translate(34,239) scale(0.666,1)" font-size="73" stroke="#a5a5a1" stroke-width="1.8" x="0.0 43.8 87.6 131.4 180.0 219.0 266.1 306.7 350.5" dy="0.0 0.0 0.0 0.0 -7.9 7.9 0.0 0.0 0.0">TFPU<tspan font-size="56.9">@</tspan>1<tspan font-family="Liberation Sans, sans-serif" font-size="67.0">0</tspan>8M</text></g></g>
<circle cx="37.4" cy="286.8" r="25.3" fill="url(#dg)"/>
<circle cx="37.4" cy="286.8" r="25" fill="none" stroke="#555a70" stroke-width="1" opacity="0.55"/>
<path d="M13.6 295.5 A25.3 25.3 0 0 0 61.2 295.5" fill="none" stroke="#7c8096" stroke-width="1.6" opacity="0.8"/>
<path d="M18 303 A25.3 25.3 0 0 0 54 305.8" fill="none" stroke="#c4c8d6" stroke-width="1.7" opacity="0.9" filter="url(#b1)"/>
<path d="M16 273 A25.3 25.3 0 0 1 55 268.6" fill="none" stroke="#06060b" stroke-width="1.6" opacity="0.7"/>
</svg>
<svg class="abs" style="left:542px;top:625px" width="14" height="21" viewBox="0 0 14 21"><path d="M0.6 0.8V17.2L4.4 13.6L7.2 19.8L9.6 18.7L6.9 12.7H12.2Z" fill="#fff" stroke="#000" stroke-width="1.1" stroke-linejoin="miter"/></svg>
</div>
<div class="abs panel" style="left:555px;top:728px;width:526px;height:250px">
<div class="hdr" style="left:2px;top:1px;width:99px">外设名称</div>
<div class="hdr" style="left:101px;top:1px;width:200px">外设管脚</div>
<div class="hdr" style="left:301px;top:1px;width:200px">说明</div>
<div class="abs" style="left:101px;top:1px;width:1px;height:24px;background:#f4f4f4"></div>
<div class="abs" style="left:301px;top:1px;width:1px;height:24px;background:#f4f4f4"></div>
<div class="hl" style="left:0px;top:47px;width:506px"></div>
<div class="cell c" style="left:2px;top:25px;width:99px">USB</div>
<div class="cell c bl" style="left:101px;top:25px;width:199px">D- (P3.0), D+ (P3.1)</div>
<div class="cell" style="left:307px;top:25px;width:194px">USB的D-和D+固定在P3.0和P...</div>
<div class="hl" style="left:0px;top:70px;width:506px"></div>
<div class="cell c" style="left:2px;top:48px;width:99px">UART1</div>
<div class="cell" style="left:307px;top:48px;width:194px">选择串口1的管脚切换</div>
<div class="hl" style="left:0px;top:93px;width:506px"></div>
<div class="cell c" style="left:2px;top:71px;width:99px">UART2</div>
<div class="cell" style="left:307px;top:71px;width:194px">选择串口2的管脚切换</div>
<div class="hl" style="left:0px;top:116px;width:506px"></div>
<div class="cell c" style="left:2px;top:94px;width:99px">UART3</div>
<div class="cell" style="left:307px;top:94px;width:194px">选择串口3的管脚切换</div>
<div class="hl" style="left:0px;top:139px;width:506px"></div>
<div class="cell c" style="left:2px;top:117px;width:99px">UART4</div>
<div class="cell" style="left:307px;top:117px;width:194px">选择串口4的管脚切换</div>
<div class="hl" style="left:0px;top:162px;width:506px"></div>
<div class="cell c" style="left:2px;top:140px;width:99px">SPI</div>
<div class="cell" style="left:307px;top:140px;width:194px">选择SPI的管脚切换</div>
<div class="hl" style="left:0px;top:185px;width:506px"></div>
<div class="cell c" style="left:2px;top:163px;width:99px">QSPI</div>
<div class="cell" style="left:307px;top:163px;width:194px">选择QSPI的管脚切换</div>
<div class="hl" style="left:0px;top:208px;width:506px"></div>
<div class="cell c" style="left:2px;top:186px;width:99px">I2C</div>
<div class="cell" style="left:307px;top:186px;width:194px">选择I2C的管脚切换</div>
<div class="hl" style="left:0px;top:231px;width:506px"></div>
<div class="cell c" style="left:2px;top:209px;width:99px">I2S</div>
<div class="cell" style="left:307px;top:209px;width:194px">选择音频总线I2S的管脚切换</div>
<div class="hl" style="left:0px;top:254px;width:506px"></div>
<div class="vl" style="left:101px;top:25px;height:230px"></div>
<div class="vl" style="left:301px;top:25px;height:230px"></div>
<div class="vl" style="left:501px;top:25px;height:230px"></div>
<div class="abs" style="left:507px;top:1px;width:17px;height:240px;background:#f0f0f0"><svg class="abs" style="left:4px;top:6px" width="9" height="7" viewBox="0 0 9 7"><path d="M1 6L4.4 2.4L7.8 6" fill="none" stroke="#505050" stroke-width="2"/></svg><div class="abs" style="left:0;top:17px;width:16px;height:73px;background:#cdcdcd"></div></div>
</div>
<div class="abs gap" style="left:1081px;top:728px;width:5px;height:240px"></div>
<div class="abs panel" style="left:1086px;top:728px;width:660px;height:250px">
<div class="hdr" style="left:1px;top:1px;width:100px">管脚名称</div>
<div class="hdr" style="left:101px;top:1px;width:100px">管脚功能</div>
<div class="abs" style="left:101px;top:1px;width:1px;height:24px;background:#f4f4f4"></div>
<div class="hdr" style="left:201px;top:1px;width:100px">管脚别名</div>
<div class="abs" style="left:201px;top:1px;width:1px;height:24px;background:#f4f4f4"></div>
<div class="hdr" style="left:301px;top:1px;width:100px">I/O口模式</div>
<div class="abs" style="left:301px;top:1px;width:1px;height:24px;background:#f4f4f4"></div>
<div class="hdr" style="left:401px;top:1px;width:100px">上拉电阻</div>
<div class="abs" style="left:401px;top:1px;width:1px;height:24px;background:#f4f4f4"></div>
<div class="hdr" style="left:501px;top:1px;width:100px">下拉电阻</div>
<div class="abs" style="left:501px;top:1px;width:1px;height:24px;background:#f4f4f4"></div>
<div class="hdr" style="left:601px;top:1px;width:100px">施密特触发</div>
<div class="abs" style="left:601px;top:1px;width:1px;height:24px;background:#f4f4f4"></div>
<div class="hl" style="left:0px;top:47px;width:700px"></div>
<div class="cell c" style="left:1px;top:25px;width:100px">P0.6</div>
<div class="cell c bl" style="left:301px;top:25px;width:100px">推挽输出模式</div>
<div class="cell c bl" style="left:401px;top:25px;width:100px">使能</div>
<div class="cell c" style="left:501px;top:25px;width:100px">关闭</div>
<div class="hl" style="left:0px;top:70px;width:700px"></div>
<div class="cell c" style="left:1px;top:48px;width:100px">P0.7</div>
<div class="cell c bl" style="left:301px;top:48px;width:100px">推挽输出模式</div>
<div class="cell c bl" style="left:401px;top:48px;width:100px">使能</div>
<div class="cell c" style="left:501px;top:48px;width:100px">关闭</div>
<div class="hl" style="left:0px;top:93px;width:700px"></div>
<div class="cell c" style="left:1px;top:71px;width:100px">P1.0</div>
<div class="cell c" style="left:301px;top:71px;width:100px">准双向口模式</div>
<div class="cell c" style="left:401px;top:71px;width:100px">关闭</div>
<div class="cell c" style="left:501px;top:71px;width:100px">关闭</div>
<div class="hl" style="left:0px;top:116px;width:700px"></div>
<div class="cell c" style="left:1px;top:94px;width:100px">P1.1</div>
<div class="cell c" style="left:301px;top:94px;width:100px">准双向口模式</div>
<div class="cell c" style="left:401px;top:94px;width:100px">关闭</div>
<div class="cell c" style="left:501px;top:94px;width:100px">关闭</div>
<div class="hl" style="left:0px;top:139px;width:700px"></div>
<div class="cell c" style="left:1px;top:117px;width:100px">P1.2</div>
<div class="cell c" style="left:301px;top:117px;width:100px">准双向口模式</div>
<div class="cell c" style="left:401px;top:117px;width:100px">关闭</div>
<div class="cell c" style="left:501px;top:117px;width:100px">关闭</div>
<div class="hl" style="left:0px;top:162px;width:700px"></div>
<div class="cell c" style="left:1px;top:140px;width:100px">P1.3</div>
<div class="cell c" style="left:301px;top:140px;width:100px">准双向口模式</div>
<div class="cell c" style="left:401px;top:140px;width:100px">关闭</div>
<div class="cell c" style="left:501px;top:140px;width:100px">关闭</div>
<div class="hl" style="left:0px;top:185px;width:700px"></div>
<div class="cell c" style="left:1px;top:163px;width:100px">P1.4</div>
<div class="cell c" style="left:301px;top:163px;width:100px">准双向口模式</div>
<div class="cell c" style="left:401px;top:163px;width:100px">关闭</div>
<div class="cell c" style="left:501px;top:163px;width:100px">关闭</div>
<div class="abs" style="left:1px;top:186px;width:700px;height:23px;background:#d9d9d9"></div>
<div class="hl" style="left:0px;top:208px;width:700px"></div>
<div class="cell c" style="left:1px;top:186px;width:100px">P1.5</div>
<div class="cell c" style="left:301px;top:186px;width:100px">准双向口模式</div>
<div class="cell c" style="left:401px;top:186px;width:100px">关闭</div>
<div class="cell c" style="left:501px;top:186px;width:100px">关闭</div>
<div class="hl" style="left:0px;top:231px;width:700px"></div>
<div class="cell c" style="left:1px;top:209px;width:100px">P1.6</div>
<div class="cell c" style="left:301px;top:209px;width:100px">准双向口模式</div>
<div class="cell c" style="left:401px;top:209px;width:100px">关闭</div>
<div class="cell c" style="left:501px;top:209px;width:100px">关闭</div>
<div class="hl" style="left:0px;top:254px;width:700px"></div>
<div class="vl" style="left:101px;top:25px;height:230px"></div>
<div class="vl" style="left:201px;top:25px;height:230px"></div>
<div class="vl" style="left:301px;top:25px;height:230px"></div>
<div class="vl" style="left:401px;top:25px;height:230px"></div>
<div class="vl" style="left:501px;top:25px;height:230px"></div>
<div class="vl" style="left:601px;top:25px;height:230px"></div>
</div>
<div class="abs" style="left:844px;top:431px;width:177px;height:172px;background:#fff;border:1px solid #6a6a6a;box-shadow:0 8px 20px rgba(0,0,0,0.28),0 1px 5px rgba(0,0,0,0.14)">
<div class="abs" style="left:8px;top:6px;font-size:11.2px;letter-spacing:0.3px;line-height:18px;color:#000;white-space:nowrap">AICUBE</div>
<svg class="abs" style="left:155.3px;top:9.5px" width="10.2" height="10.2" viewBox="0 0 11 11"><path d="M0.5 0.5L10.5 10.5M10.5 0.5L0.5 10.5" stroke="#111" stroke-width="1.1" fill="none"/></svg>
<svg class="abs" style="left:26px;top:59px" width="31" height="31" viewBox="0 0 31 31"><circle cx="15.5" cy="15.5" r="15" fill="#0a6fcf"/><rect x="14.7" y="12.5" width="1.7" height="11.5" fill="#fff"/><rect x="14.5" y="7.6" width="2.1" height="2.4" fill="#fff"/></svg>
<div class="abs" style="left:65px;top:64.5px;font-size:10.8px;line-height:18px;color:#000;white-space:nowrap">项目创建成功<span style="margin-left:1.5px">！</span></div>
<div class="abs" style="left:0;top:118px;width:175px;height:52px;background:#f0f0f0"></div>
<div class="abs" style="left:69px;top:131px;width:86px;height:26px;border:2px solid #0078d7;background:#e1e1e1;font-size:10.8px;line-height:24px;text-align:center;color:#000">确定</div>
</div>

</div></body></html>
